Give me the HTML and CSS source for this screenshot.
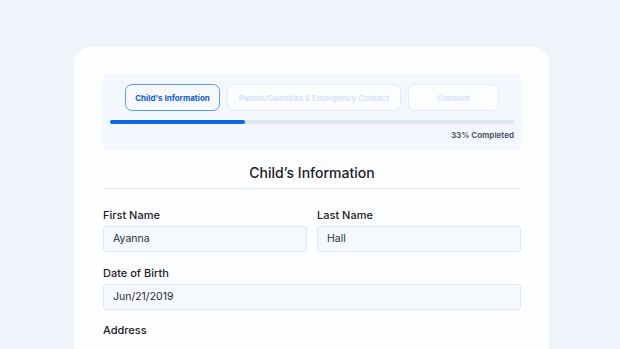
FILE: index.html
```html
<!DOCTYPE html>
<html lang="en">
<head>
  <meta charset="UTF-8" />
  <meta name="viewport" content="width=device-width, initial-scale=1.0"/>
  <title>Registration</title>
  <link rel="stylesheet" href="styles.css">
</head>
<body>

  <div class="card">
    <!-- steps -->
    <div class="steps">
      <div class="tabs">
        <div class="tab active">Child's Information</div>
        <div class="tab wide">Parent/Guardian &amp; Emergency Contact</div>
        <div class="tab">Consent</div>
      </div>
      <div class="track"><div class="fill" style="width: 33.3%"></div></div>
      <div class="percent">33% Completed</div>
    </div>

    <h2 class="section-title">Child’s Information</h2>

    <div class="row">
      <div class="field">
        <label>First Name</label>
        <div class="input">Ayanna</div>
      </div>
      <div class="field">
        <label>Last Name</label>
        <div class="input">Hall</div>
      </div>
    </div>

    <div class="field">
      <label>Date of Birth</label>
      <div class="input">Jun/21/2019</div>
    </div>

    <div class="field address">
      <label>Address</label>
      <div class="input"></div>
    </div>
  </div>

</body>
</html>
```

FILE: styles.css
```css
body {
  margin: 0;
  height: 349px;
  overflow: hidden;
  background: #eff3fa;
  font-family: 'Inter', 'Noto Sans', sans-serif;
  color: #1f2430;
}

.card {
  width: 420px;
  margin: 47px 0 0 74px;
  padding: 27px 27px 20px 28px;
  background: #fdfeff;
  border-radius: 16px;
}

.steps {
  background: #f3f7fe;
  border-radius: 6px;
  padding: 10px 8px 10px 8px;
}

.tabs {
  display: flex;
  justify-content: center;
  gap: 7px;
}

.tab {
  height: 25px;
  border: 1px solid #e4ebf6;
  border-radius: 7px;
  background: #fbfdff;
  color: #d8e3f7;
  font-size: 8px;
  font-weight: 700;
  display: flex;
  align-items: center;
  justify-content: center;
  width: 89px;
}

.tab.wide {
  width: 172px;
}

.tab.active {
  width: 93px;
  border-color: #5c9be9;
  color: #1459c7;
  background: #f6f9ff;
}

.track {
  margin-top: 9px;
  height: 4px;
  border-radius: 2px;
  background: #dde6f3;
}

.fill {
  height: 100%;
  border-radius: 2px;
  background: #0b67e6;
}

.percent {
  margin-top: 6px;
  text-align: right;
  font-size: 8px;
  font-weight: 700;
  color: #545b6a;
}

.section-title {
  margin: 0;
  padding: 14px 0 7px;
  text-align: center;
  font-size: 14px;
  font-weight: 500;
  color: #1c2029;
  border-bottom: 1px solid #e6eaf0;
}

.row {
  display: flex;
  gap: 10px;
  margin-top: 19px;
  padding: 0 1px;
}

.row .field {
  flex: 1;
  margin-top: 0;
  padding: 0;
}

.field {
  margin-top: 13px;
  padding: 0 1px;
}

.field label {
  display: block;
  font-size: 11px;
  font-weight: 500;
  color: #1c2029;
  margin-bottom: 4px;
}

.input {
  height: 24px;
  border: 1px solid #dfe7f3;
  border-radius: 3px;
  background: #f5f8fd;
  padding: 0 9px;
  font-size: 10.5px;
  line-height: 24px;
  color: #2a2e37;
}

.row + .field {
  margin-top: 14px;
}

.address label {
  margin-bottom: 14px;
}
```
